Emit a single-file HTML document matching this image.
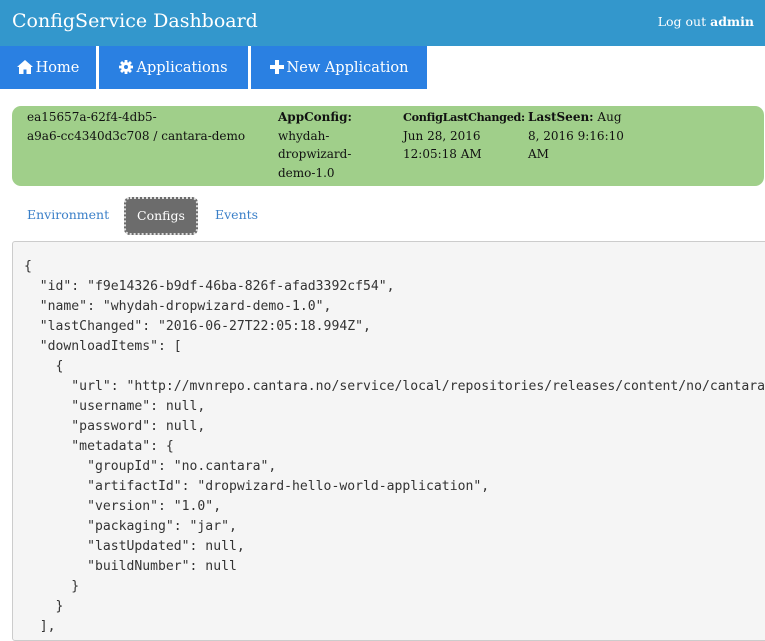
<!DOCTYPE html>
<html><head><meta charset="utf-8"><style>
body{margin:0;width:765px;height:636px;overflow:hidden;background:#fff;font-family:"DejaVu Serif",serif;}
.hdr{position:absolute;left:0;top:0;width:765px;height:46px;background:#3397cc;color:#fff;}
.hdr .t{position:absolute;left:12px;top:10px;font-size:19px;}
.hdr .r{position:absolute;right:11px;top:14px;font-size:12.5px;}
.nav a{position:absolute;top:46px;height:43px;background:#2a80e2;color:#fff;font-size:14.5px;line-height:44px;text-align:center;}
.nav svg{vertical-align:-2px;margin-right:3px}
.g{position:absolute;left:12px;top:106px;width:752px;height:80px;background:#a0cf8a;border-radius:9px;font-size:12px;line-height:18.5px;color:#111;}
.g div{position:absolute;top:2px;}
.tabs span{position:absolute;top:207px;font-size:12.5px;color:#3a7fc8;}
.pill{position:absolute;left:124px;top:197px;width:70px;height:34px;background:#6c6c6c;border:2px dotted #ddd;border-radius:6px;color:#fff;font-size:12.5px;line-height:34px;text-align:center;}
pre{position:absolute;left:12px;top:241px;width:760px;height:400px;margin:0;background:#f5f5f5;border:1px solid #ccc;border-radius:3px;font-family:"DejaVu Sans Mono",monospace;font-size:13.1px;line-height:20px;padding:15px 0 0 11px;color:#333;box-sizing:border-box;overflow:hidden;white-space:pre;}
</style></head><body>
<div class="hdr"><div class="t">ConfigService Dashboard</div><div class="r">Log out <b>admin</b></div></div>
<div class="nav">
<a style="left:0;width:96px"><svg width="16" height="14" viewBox="0 0 16 14"><path d="M8 0L0 7h2v7h4.5V9.5h3V14H14V7h2z" fill="#fff"/></svg>Home</a>
<a style="left:99px;width:149px"><svg width="14" height="14" viewBox="0 0 14 14"><g fill="#fff"><circle cx="7" cy="7" r="5"/><rect x="5.6" y="0" width="2.8" height="14"/><rect x="0" y="5.6" width="14" height="2.8"/><rect x="5.6" y="0" width="2.8" height="14" transform="rotate(45 7 7)"/><rect x="5.6" y="0" width="2.8" height="14" transform="rotate(-45 7 7)"/></g><circle cx="7" cy="7" r="2" fill="#2a80e2"/></svg>Applications</a>
<a style="left:251px;width:176px"><svg width="14" height="14" viewBox="0 0 14 14"><path d="M5 0h4v5h5v4H9v5H5V9H0V5h5z" fill="#fff"/></svg>New Application</a>
</div>
<div class="g">
<div style="left:15px">ea15657a-62f4-4db5-<br>a9a6-cc4340d3c708 / cantara-demo</div>
<div style="left:266px"><b>AppConfig:</b><br>whydah-<br>dropwizard-<br>demo-1.0</div>
<div style="left:391px"><b style="font-size:11.2px;letter-spacing:-0.3px">ConfigLastChanged:</b><br>Jun 28, 2016<br>12:05:18 AM</div>
<div style="left:516px"><b>LastSeen:</b> Aug<br>8, 2016 9:16:10<br>AM</div>
</div>
<div class="tabs"><span style="left:27px">Environment</span><span style="left:215px">Events</span></div>
<div class="pill">Configs</div>
<pre>{
  "id": "f9e14326-b9df-46ba-826f-afad3392cf54",
  "name": "whydah-dropwizard-demo-1.0",
  "lastChanged": "2016-06-27T22:05:18.994Z",
  "downloadItems": [
    {
      "url": "http://mvnrepo.cantara.no/service/local/repositories/releases/content/no/cantara",
      "username": null,
      "password": null,
      "metadata": {
        "groupId": "no.cantara",
        "artifactId": "dropwizard-hello-world-application",
        "version": "1.0",
        "packaging": "jar",
        "lastUpdated": null,
        "buildNumber": null
      }
    }
  ],
</pre>
</body></html>
